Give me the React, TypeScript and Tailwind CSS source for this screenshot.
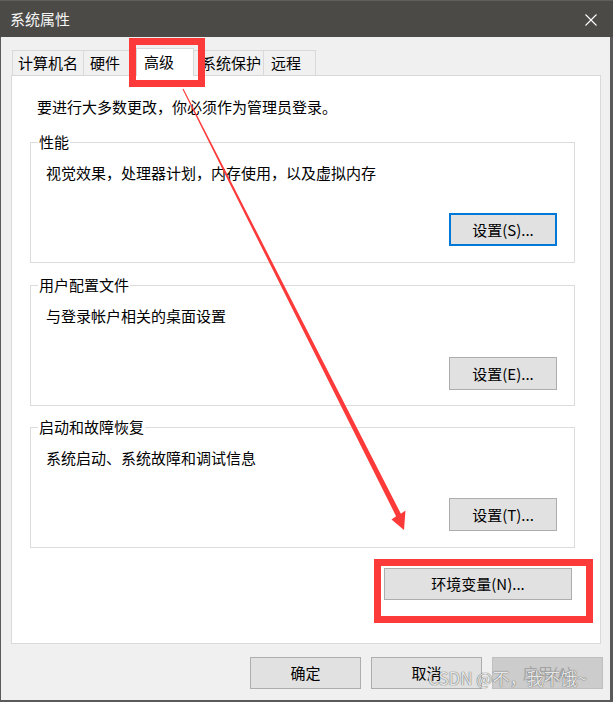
import React from "react";

const font = "font-['Noto_Sans_CJK_SC','Noto_Sans',sans-serif]";

const tabs = [
  { label: "计算机名", w: "w-[72px]", pl: "pl-[5px]", active: false },
  { label: "硬件", w: "w-[54px]", pl: "pl-[6px]", active: false },
  { label: "高级", w: "w-[58px]", pl: "pl-[7px]", active: true },
  { label: "系统保护", w: "w-[71px]", pl: "pl-[7px]", active: false },
  { label: "远程", w: "w-[53px]", pl: "pl-[7px]", active: false },
];

const Btn = ({ children, focused = false, disabled = false, className = "" }: { children: React.ReactNode; focused?: boolean; disabled?: boolean; className?: string }) => (
  <button
    className={`flex items-center justify-center text-[15px] leading-[20px] ${
      focused
        ? "border-2 border-[#0078d7] bg-[#e1e1e1] text-black"
        : disabled
        ? "border border-[#bfbfbf] bg-[#cccccc] text-[#a3a3a3]"
        : "border border-[#adadad] bg-[#e1e1e1] text-black"
    } ${className}`}
  >
    {children}
  </button>
);

const Group = ({ title, text, button, focused = false, mtText, mtBtn, pb, className = "" }: { title: string; text: string; button: string; focused?: boolean; mtText: string; mtBtn: string; pb: string; className?: string }) => (
  <fieldset className={`border border-[#dcdcdc] pl-[7px] pr-[17px] ${pb} ${className}`}>
    <legend className="px-[1px] text-[15px] leading-[20px] text-black">{title}</legend>
    <div className={`pl-[8px] text-[15px] leading-[20px] text-black ${mtText}`}>{text}</div>
    <div className={`flex justify-end ${mtBtn}`}>
      <Btn focused={focused} className="w-[108px] h-[33px]">{button}</Btn>
    </div>
  </fieldset>
);

export default function App() {
  return (
    <div className={`relative w-[613px] h-[702px] flex flex-col bg-[#f0f0f0] ${font}`}>
      {/* title bar */}
      <div className="h-[37px] shrink-0 bg-[#4b4a47] border-t border-[#5f5e5b] flex items-center justify-between pl-[10px] pr-[16px]">
        <span className="text-[15px] leading-[20px] text-[#f5f5f5]">系统属性</span>
        <svg width="12" height="12" viewBox="0 0 12 12" className="mt-[1px]">
          <path d="M0.5 0.5 L11.5 11.5 M11.5 0.5 L0.5 11.5" stroke="#ffffff" strokeWidth="1.1" />
        </svg>
      </div>

      {/* body */}
      <div className="flex-1 flex flex-col border-l border-r-[3px] border-b-[2px] border-[#5a5a5a] pl-[10px] pr-[7px] pt-[11px]">
        <div className="flex items-end h-[27px] pl-[1px]">
          {tabs.map((t, i) => (
            <div
              key={t.label}
              className={`${t.w} ${t.pl} ${i > 0 ? "-ml-[1px]" : ""} border-t border-l border-r border-[#d9d9d9] text-[15px] leading-[20px] text-black ${
                t.active ? "relative z-10 h-[28px] -mb-[1px] bg-white pt-[3px]" : "h-[25px] bg-[#f0f0f0] pt-[2px]"
              }`}
            >
              {t.label}
            </div>
          ))}
        </div>

        <div className="h-[569px] mr-[2px] bg-white border border-[#d9d9d9] pl-[18px] pr-[25px] pt-[21px]">
          <div className="pl-[7px] text-[15px] leading-[20px] text-black">要进行大多数更改，你必须作为管理员登录。</div>

          <Group title="性能" text="视觉效果，处理器计划，内存使用，以及虚拟内存" button="设置(S)..." focused mtText="mt-[11px]" mtBtn="mt-[30px]" pb="pb-[16px]" className="mt-[15px]" />
          <Group title="用户配置文件" text="与登录帐户相关的桌面设置" button="设置(E)..." mtText="mt-[11px]" mtBtn="mt-[31px]" pb="pb-[15px]" className="mt-[12px]" />
          <Group title="启动和故障恢复" text="系统启动、系统故障和调试信息" button="设置(T)..." mtText="mt-[11px]" mtBtn="mt-[30px]" pb="pb-[16px]" className="mt-[11px]" />

          <div className="flex justify-end pr-[3px] mt-[20px]">
            <Btn className="w-[188px] h-[32px]">环境变量(N)...</Btn>
          </div>
        </div>

        <div className="flex justify-end gap-[10px] mt-[13px]">
          <Btn className="w-[111px] h-[32px]">确定</Btn>
          <Btn className="w-[111px] h-[32px]">取消</Btn>
          <Btn disabled className="w-[111px] h-[32px]">应用(A)</Btn>
        </div>
      </div>

      {/* annotations */}
      <div className="absolute left-[129px] top-[38px] w-[76px] h-[49px] border-[7px] border-[#fd3a3a] z-20" />
      <div className="absolute left-[374px] top-[559px] w-[219px] h-[64px] border-[7px] border-[#fd3a3a] z-20" />
      <svg className="absolute inset-0 z-20 pointer-events-none" width="613" height="702" viewBox="0 0 613 702">
        <polygon
          points="182.5,89.3 396.1,516.2 391.5,519.5 404,530 405.5,510.5 400.9,513.8 183.5,88.7"
          fill="#fd3a3a"
        />
      </svg>
      <div className="absolute left-[428px] top-[667px] z-30 text-[17px] leading-[22px] text-[#e6e6e6] [text-shadow:0_0_1px_#6a6a6a,0_0_1px_#6a6a6a]">
        CSDN @不，我不饿~
      </div>
    </div>
  );
}
